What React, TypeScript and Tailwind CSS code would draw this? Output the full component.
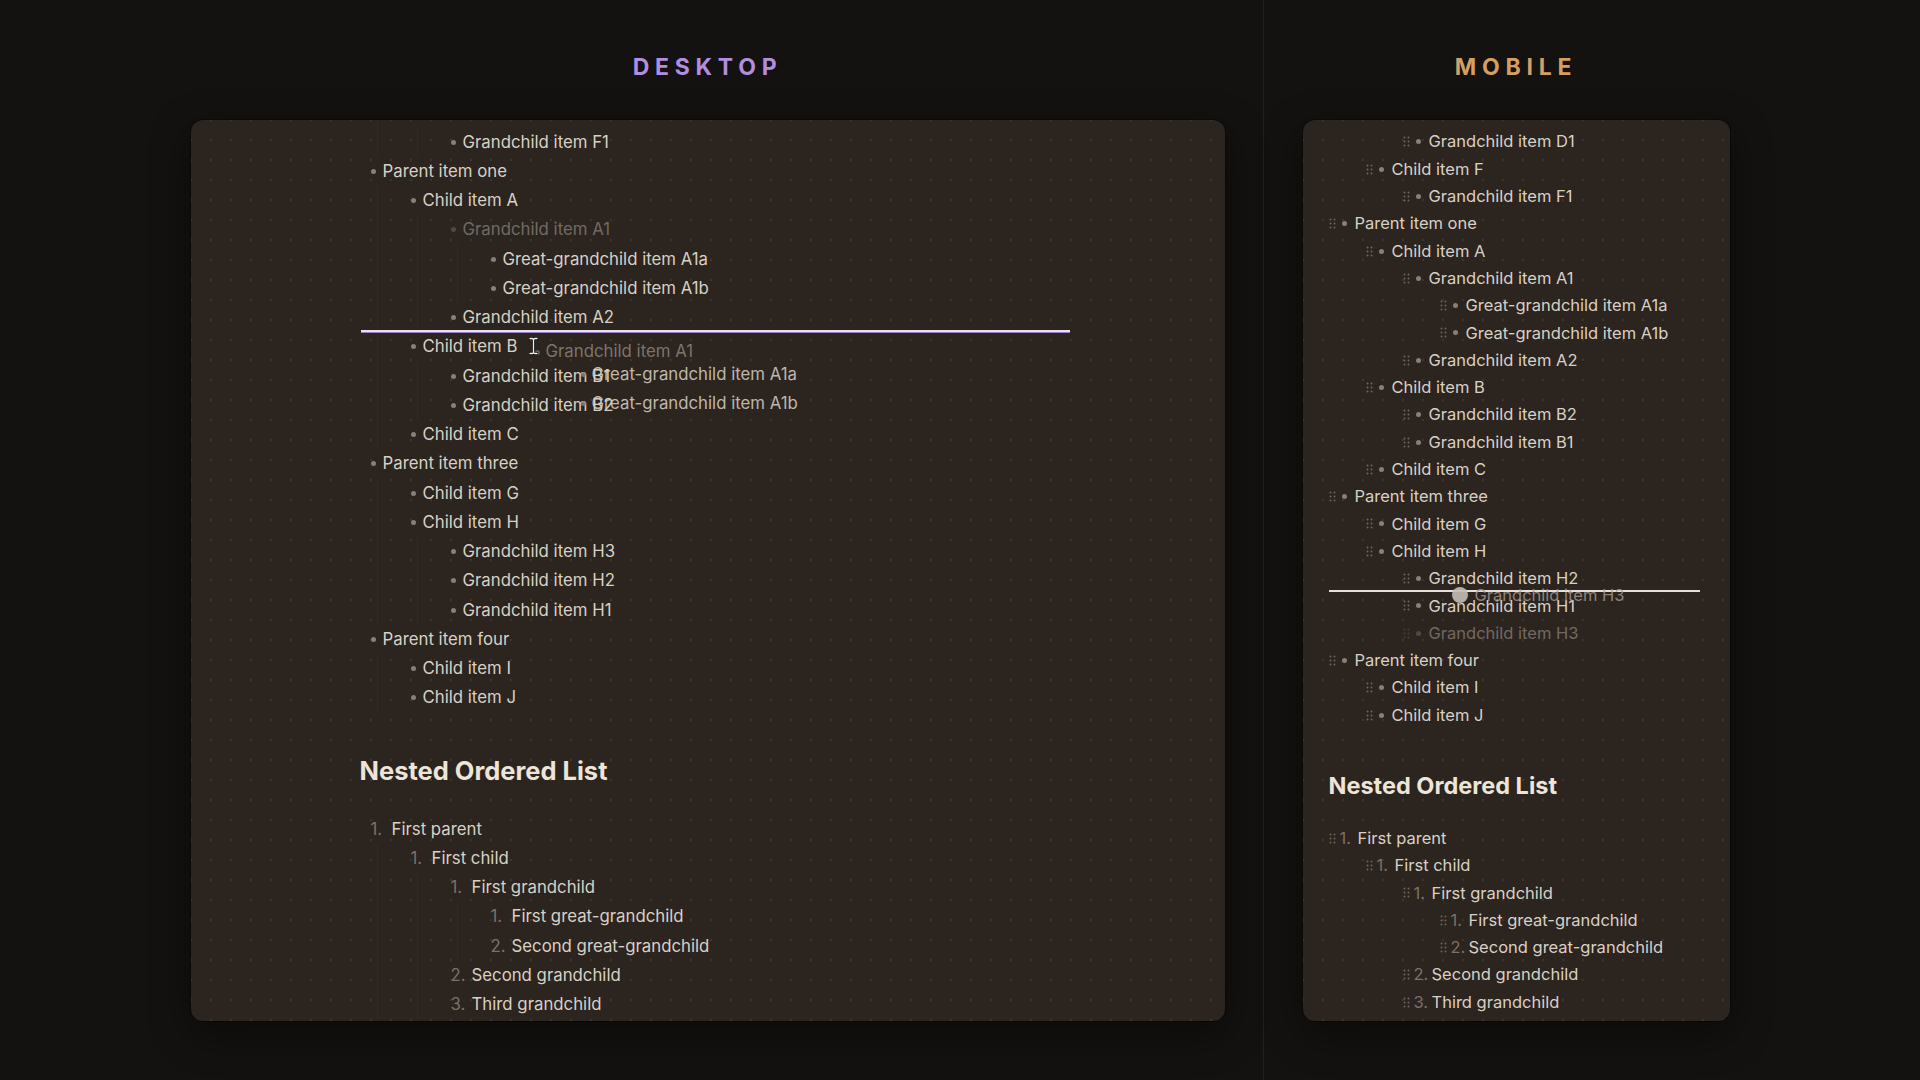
import React from "react";

type Node = { text: string; faded?: boolean; shift?: boolean; children?: Node[] };

const desktopTree: Node[] = [
  {
    text: "Parent item two",
    children: [{ text: "Child item F", children: [{ text: "Grandchild item F1" }] }],
  },
  {
    text: "Parent item one",
    children: [
      {
        text: "Child item A",
        children: [
          {
            text: "Grandchild item A1",
            faded: true,
            children: [{ text: "Great-grandchild item A1a" }, { text: "Great-grandchild item A1b" }],
          },
          { text: "Grandchild item A2" },
        ],
      },
      { text: "Child item B", children: [{ text: "Grandchild item B1" }, { text: "Grandchild item B2" }] },
      { text: "Child item C" },
    ],
  },
  {
    text: "Parent item three",
    children: [
      { text: "Child item G" },
      {
        text: "Child item H",
        children: [{ text: "Grandchild item H3" }, { text: "Grandchild item H2" }, { text: "Grandchild item H1" }],
      },
    ],
  },
  { text: "Parent item four", children: [{ text: "Child item I" }, { text: "Child item J" }] },
];

const mobileTree: Node[] = [
  {
    text: "Parent item two",
    children: [
      {
        text: "Child item D",
        children: [
          { text: "Grandchild item D2", children: [{ text: "Great-grandchild item D2a", shift: true }] },
          { text: "Grandchild item D1" },
        ],
      },
      { text: "Child item F", children: [{ text: "Grandchild item F1" }] },
    ],
  },
  {
    text: "Parent item one",
    children: [
      {
        text: "Child item A",
        children: [
          {
            text: "Grandchild item A1",
            children: [{ text: "Great-grandchild item A1a" }, { text: "Great-grandchild item A1b" }],
          },
          { text: "Grandchild item A2" },
        ],
      },
      { text: "Child item B", children: [{ text: "Grandchild item B2" }, { text: "Grandchild item B1" }] },
      { text: "Child item C" },
    ],
  },
  {
    text: "Parent item three",
    children: [
      { text: "Child item G" },
      {
        text: "Child item H",
        children: [
          { text: "Grandchild item H2" },
          { text: "Grandchild item H1" },
          { text: "Grandchild item H3", faded: true },
        ],
      },
    ],
  },
  { text: "Parent item four", children: [{ text: "Child item I" }, { text: "Child item J" }] },
];

const orderedTree: Node[] = [
  {
    text: "First parent",
    children: [
      {
        text: "First child",
        children: [
          {
            text: "First grandchild",
            children: [{ text: "First great-grandchild" }, { text: "Second great-grandchild" }],
          },
          { text: "Second grandchild" },
          { text: "Third grandchild" },
        ],
      },
    ],
  },
];

function Grip() {
  return (
    <svg width="7" height="11" viewBox="0 0 7 11" className="shrink-0">
      {[1.5, 5.5].map((x) =>
        [1.5, 5.5, 9.5].map((y) => <circle key={`${x}-${y}`} cx={x} cy={y} r="0.95" fill="#6f665c" />)
      )}
    </svg>
  );
}

function DesktopBullets({ nodes, level }: { nodes: Node[]; level: number }) {
  return (
    <div className={level > 0 ? "ml-[6px] border-l border-[#322a23] pl-[33px]" : ""}>
      {nodes.map((n, i) => (
        <div key={i}>
          <div className={`flex h-[29.25px] items-center ${n.faded ? "opacity-40" : ""}`}>
            <span className="mr-[7px] h-[5px] w-[5px] shrink-0 rounded-full bg-[#8a7f74]" />
            <span className="whitespace-nowrap text-[#d9d0c5]">{n.text}</span>
          </div>
          {n.children && <DesktopBullets nodes={n.children} level={level + 1} />}
        </div>
      ))}
    </div>
  );
}

function DesktopOrdered({ nodes, level }: { nodes: Node[]; level: number }) {
  return (
    <div className={level > 0 ? "ml-[6px] border-l border-[#322a23] pl-[33px]" : ""}>
      {nodes.map((n, i) => (
        <div key={i}>
          <div className="flex h-[29.25px] items-center">
            <span className="w-[21px] shrink-0 text-[#7c7167]">{i + 1}.</span>
            <span className="whitespace-nowrap text-[#d9d0c5]">{n.text}</span>
          </div>
          {n.children && <DesktopOrdered nodes={n.children} level={level + 1} />}
        </div>
      ))}
    </div>
  );
}

function MobileBullets({ nodes, level }: { nodes: Node[]; level: number }) {
  return (
    <div className={level > 0 ? "pl-[37px]" : ""}>
      {nodes.map((n, i) => (
        <div key={i}>
          <div
            className={`flex h-[27.3px] items-center ${n.faded ? "opacity-40" : ""} ${
              n.shift ? "-translate-y-[4px]" : ""
            }`}
          >
            <Grip />
            <span className="ml-[6px] mr-[8px] h-[5px] w-[5px] shrink-0 rounded-full bg-[#8a7f74]" />
            <span className="whitespace-nowrap text-[#d9d0c5]">{n.text}</span>
          </div>
          {n.children && <MobileBullets nodes={n.children} level={level + 1} />}
        </div>
      ))}
    </div>
  );
}

function MobileOrdered({ nodes, level }: { nodes: Node[]; level: number }) {
  return (
    <div className={level > 0 ? "pl-[37px]" : ""}>
      {nodes.map((n, i) => (
        <div key={i}>
          <div className="flex h-[27.3px] items-center">
            <Grip />
            <span className="ml-[4px] w-[18px] shrink-0 text-[#7c7167]">{i + 1}.</span>
            <span className="whitespace-nowrap text-[#d9d0c5]">{n.text}</span>
          </div>
          {n.children && <MobileOrdered nodes={n.children} level={level + 1} />}
        </div>
      ))}
    </div>
  );
}

function IBeam() {
  const d =
    "M1 1.5 H3 Q4.5 1.5 4.5 3 Q4.5 1.5 6 1.5 H8 M4.5 3 V15 M1 16.5 H3 Q4.5 16.5 4.5 15 Q4.5 16.5 6 16.5 H8";
  return (
    <svg width="9" height="18" viewBox="0 0 9 18">
      <path d={d} stroke="#111" strokeWidth="3" fill="none" strokeLinecap="round" />
      <path d={d} stroke="#f2f2f2" strokeWidth="1.3" fill="none" strokeLinecap="round" />
    </svg>
  );
}

const panelBase =
  "relative h-[901px] overflow-hidden rounded-[12px] bg-[#2b241f] [background-image:radial-gradient(circle,rgba(255,235,210,0.085)_1px,transparent_1.3px)] [background-size:20px_20px] [background-position:10px_10px] shadow-[0_0_0_1px_rgba(0,0,0,0.35),0_12px_40px_rgba(0,0,0,0.45)]";

export default function App() {
  return (
    <div className="flex min-h-[1080px] w-full justify-center bg-[#131210] font-['Inter',sans-serif]">
      {/* Desktop column */}
      <div className="flex w-[1034px] flex-col pt-[52px]">
        <div className="mb-[38px] flex h-[30px] items-center justify-center text-[23px] font-bold tracking-[0.25em] text-[#b28de0]">
          DESKTOP
        </div>
        <div className={`${panelBase} text-[16.8px]`}>
          <div className="-mt-[51px] pl-[180px]">
            <DesktopBullets nodes={desktopTree} level={0} />
            <h2 className="-ml-[11px] mb-[25px] mt-[41px] flex h-[36px] items-center text-[25.5px] font-bold text-[#ede5da]">
              Nested Ordered List
            </h2>
            <DesktopOrdered nodes={orderedTree} level={0} />
          </div>

          {/* drop indicator */}
          <div className="absolute left-[170px] top-[209.5px] h-[2px] w-[709px] bg-[#e9e0f2] shadow-[0_1px_0_#9d7fc4]" />

          {/* drag ghost */}
          <div className="pointer-events-none absolute left-[344px] top-[218px]">
            <div className="flex h-[28px] items-center opacity-60">
              <span className="mr-[6px] h-[5px] w-[5px] rounded-full bg-[#8a7f74]" />
              <span className="whitespace-nowrap text-[#b3a99e]">Grandchild item A1</span>
            </div>
            <div className="-mt-[6px] pl-[46px]">
              <div className="flex h-[29.25px] items-center opacity-85">
                <span className="mr-[6px] h-[5px] w-[5px] rounded-full bg-[#8a7f74]" />
                <span className="whitespace-nowrap text-[#d9d0c5]">Great-grandchild item A1a</span>
              </div>
              <div className="flex h-[29.25px] items-center opacity-85">
                <span className="mr-[6px] h-[5px] w-[5px] rounded-full bg-[#8a7f74]" />
                <span className="whitespace-nowrap text-[#d9d0c5]">Great-grandchild item A1b</span>
              </div>
            </div>
          </div>
          <div className="pointer-events-none absolute left-[338px] top-[217px]">
            <IBeam />
          </div>
        </div>
      </div>

      {/* Gap with divider */}
      <div className="flex w-[78px] justify-center">
        <div className="w-px bg-[#24211c]" />
      </div>

      {/* Mobile column */}
      <div className="flex w-[427px] flex-col pt-[52px]">
        <div className="mb-[38px] flex h-[30px] items-center justify-center text-[23px] font-bold tracking-[0.25em] text-[#d39f62]">
          MOBILE
        </div>
        <div className={`${panelBase} text-[16.5px]`}>
          <div className="-mt-[101px] pl-[26px]">
            <MobileBullets nodes={mobileTree} level={0} />
            <h2 className="mb-[23px] mt-[41px] flex h-[32px] items-center text-[23.5px] font-bold text-[#ede5da]">
              Nested Ordered List
            </h2>
            <MobileOrdered nodes={orderedTree} level={0} />
          </div>

          {/* drop indicator */}
          <div className="absolute left-[26px] top-[470px] h-[2px] w-[371px] bg-[#e6e0da]" />

          {/* drag ghost */}
          <div className="pointer-events-none absolute left-[149px] top-[463px] flex h-[24px] items-center">
            <span className="h-[16px] w-[16px] rounded-full bg-[#c4bdb5] opacity-90" />
            <span className="ml-[7px] whitespace-nowrap text-[#a59c93] opacity-80">Grandchild item H3</span>
          </div>
        </div>
      </div>
    </div>
  );
}
